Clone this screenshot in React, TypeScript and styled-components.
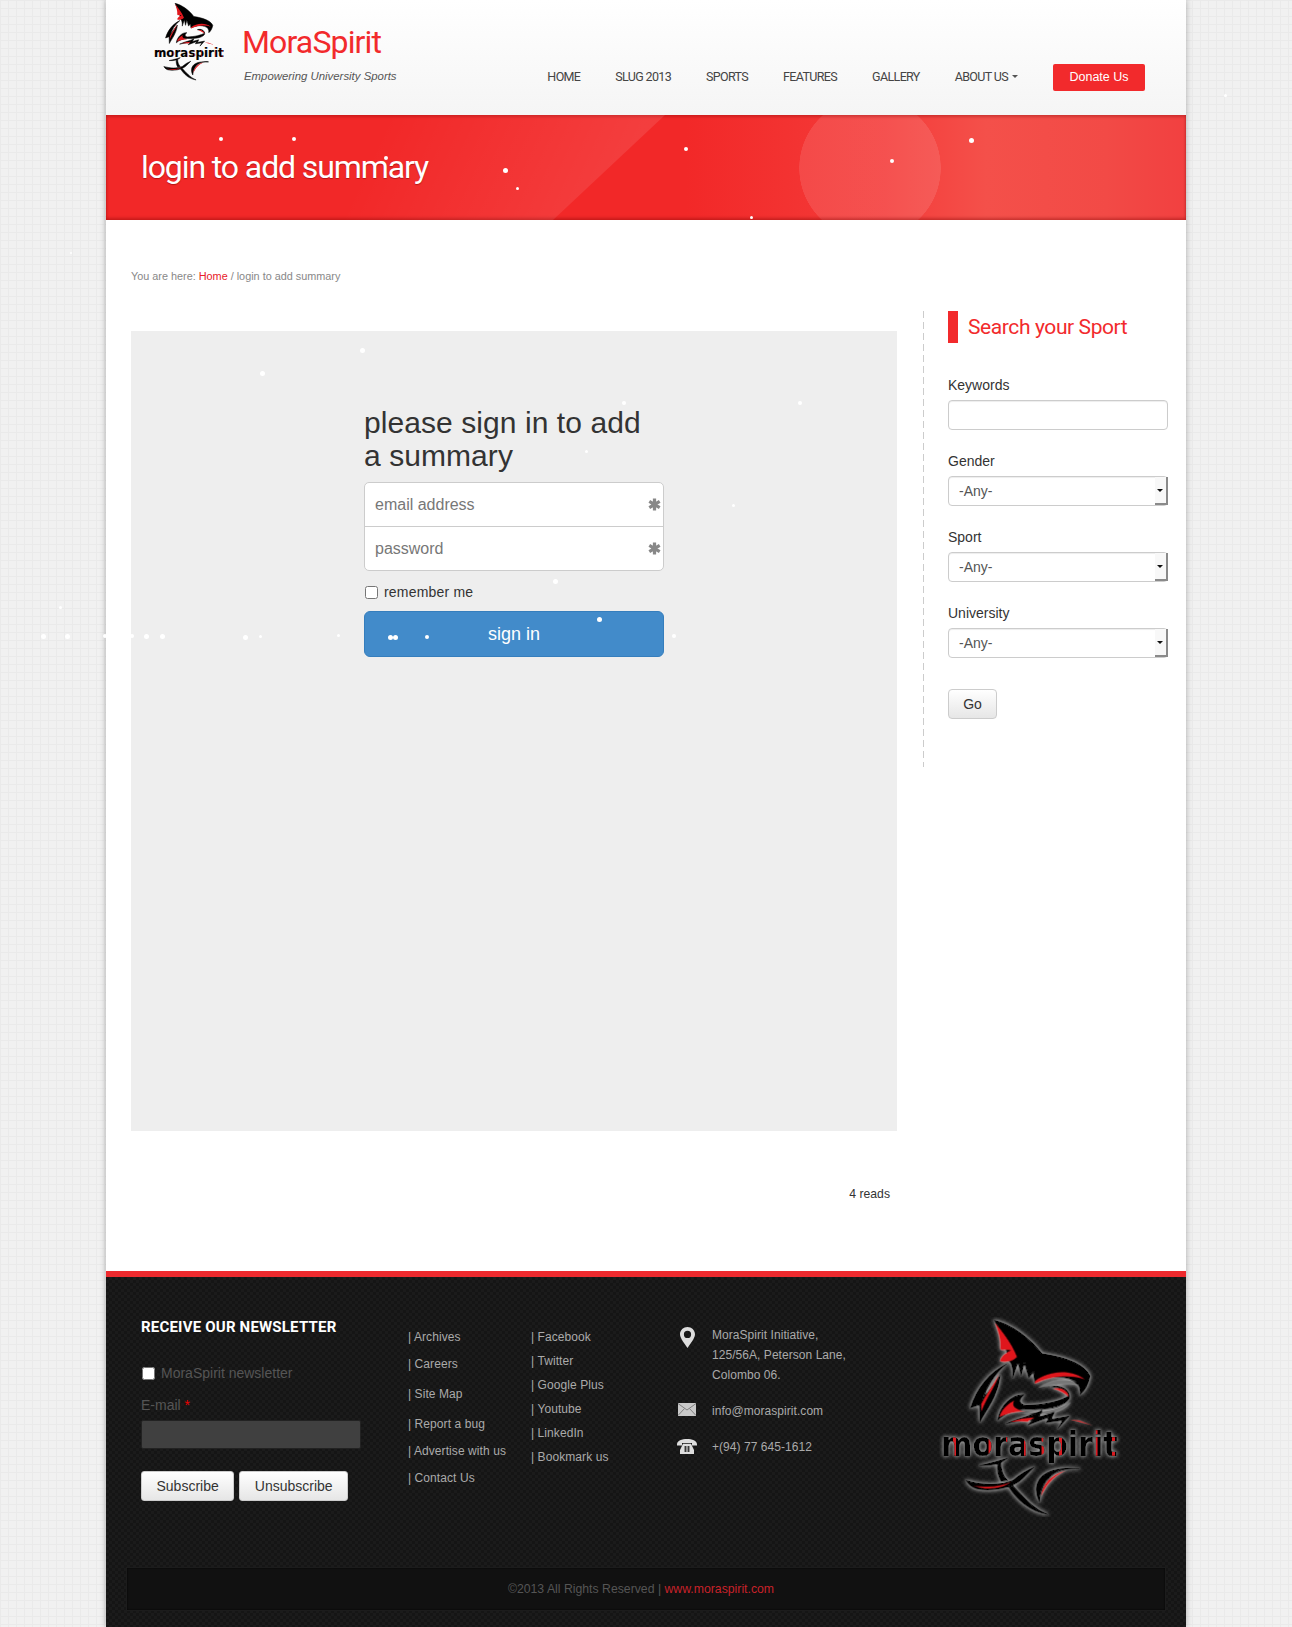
import React from "react";
import styled, { createGlobalStyle } from "styled-components";

const GlobalStyle = createGlobalStyle`
    html, body {
        margin: 0;
        padding: 0;
    }
    body {
        background-color: #f1f1f1;
        background-image: linear-gradient(#eaeaea 1px, transparent 1px), linear-gradient(90deg, #eaeaea 1px, transparent 1px);
        background-size: 8px 8px;
        font-family: "Liberation Sans", Arial, sans-serif;
        color: #333;
    }
`;

const HEADING_FONT = `Roboto, "Liberation Sans", sans-serif`;

const Page = styled.div`
    position: relative;
    height: 1627px;
    overflow: hidden;
`;

const Wrapper = styled.div`
    width: 1080px;
    height: 1627px;
    margin: 0 auto;
    background: #fff;
    box-shadow: 0 0 6px rgba(0, 0, 0, 0.3);
    display: flex;
    flex-direction: column;
`;

const Header = styled.header`
    height: 115px;
    box-sizing: border-box;
    padding: 2px 41px 0 46px;
    display: flex;
    background: linear-gradient(#ffffff, #f5f5f5);
`;

const Brand = styled.div`
    margin-left: 17px;
    padding-top: 22px;
    flex: 1;
`;

const SiteName = styled.div`
    font-family: ${HEADING_FONT};
    font-size: 32px;
    line-height: 36px;
    letter-spacing: -0.85px;
    color: #f22a2c;
`;

const Tagline = styled.div`
    margin: 9px 0 0 2px;
    font-size: 11.4px;
    line-height: 14px;
    font-style: italic;
    color: #555;
`;

const Nav = styled.nav`
    display: flex;
    align-items: center;
    height: 27px;
    margin-top: 62px;
    gap: 35px;
`;

const NavLink = styled.a`
    font-family: ${HEADING_FONT};
    font-size: 12.5px;
    letter-spacing: -0.65px;
    color: #444;
    display: flex;
    align-items: center;
    gap: 4px;
    margin-top: -2px;
`;

const Caret = styled.span`
    width: 0;
    height: 0;
    border-left: 3.5px solid transparent;
    border-right: 3.5px solid transparent;
    border-top: 3.5px solid #555;
`;

const DonateButton = styled.a`
    width: 92px;
    height: 27px;
    margin-left: 0;
    background: #f22a2c;
    color: #fff;
    border-radius: 2px;
    font-size: 12.5px;
    line-height: 27px;
    text-align: center;
`;

const Banner = styled.div`
    position: relative;
    height: 105px;
    box-sizing: border-box;
    padding: 32px 35px 0;
    overflow: hidden;
    background:
        radial-gradient(circle at 764px 53px, rgba(255, 255, 255, 0.11) 70.5px, transparent 71px),
        linear-gradient(90deg, #f22828 0, #f22828 580px, #f43c3a 780px, #f4504a 880px, #f24a46 1000px, #f24040 1080px);
    box-shadow: inset 0 2px 3px rgba(120, 0, 0, 0.3), inset 0 -2px 3px rgba(120, 0, 0, 0.35);

    &::before {
        content: "";
        position: absolute;
        inset: 0;
        clip-path: polygon(0 0, 559px 0, 447px 100%, 0 100%);
        background: linear-gradient(115deg, rgba(255, 255, 255, 0) 25%, rgba(255, 255, 255, 0.1) 48%);
    }
`;

const BannerTitle = styled.h1`
    position: relative;
    margin: 0;
    font-family: ${HEADING_FONT};
    font-weight: 400;
    font-size: 32px;
    line-height: 40px;
    letter-spacing: -1.1px;
    color: #fff;
    text-shadow: 0 1px 1px rgba(120, 0, 0, 0.5);
`;

const Main = styled.main`
    flex: 1;
    padding: 49px 18px 0 25px;
`;

const Breadcrumb = styled.div`
    font-size: 10.85px;
    line-height: 14px;
    color: #888;
    margin-bottom: 27px;
`;

const RedLink = styled.a`
    color: #e8202a;
`;

const Columns = styled.div`
    display: flex;
    align-items: flex-start;
`;

const Content = styled.div`
    width: 766px;
    margin-top: 21px;
    margin-right: 26px;
`;

const GreyBox = styled.div`
    height: 800px;
    box-sizing: border-box;
    padding-top: 75px;
    background: #eee;
`;

const SignIn = styled.form`
    width: 300px;
    margin: 0 auto;
`;

const SignInTitle = styled.h2`
    margin: 0 0 10px;
    font-size: 30px;
    line-height: 33px;
    font-weight: 400;
    letter-spacing: 0.07px;
    color: #333;
`;

const InputStack = styled.div`
    border: 1px solid #ccc;
    border-radius: 5px;
    background: #fff;
`;

const StackRow = styled.div<{ $last?: boolean }>`
    position: relative;
    box-sizing: border-box;
    height: ${(p) => (p.$last ? "43px" : "44px")};
    padding-left: 10px;
    font-size: 16px;
    line-height: 44px;
    color: #777;
    border-bottom: ${(p) => (p.$last ? "none" : "1px solid #ccc")};
`;

const Required = styled.svg`
    position: absolute;
    right: 2px;
    top: 15px;
`;

const Remember = styled.label`
    display: flex;
    align-items: center;
    margin: 11px 0 9px;
    font-size: 14px;
    line-height: 20px;
    letter-spacing: 0.2px;
    color: #333;
`;

const CheckBox = styled.input.attrs({ type: "checkbox" })`
    width: 13px;
    height: 13px;
    margin: 0 6px 0 1px;
`;

const SignInButton = styled.button`
    display: block;
    width: 300px;
    height: 46px;
    background: #428bca;
    border: 1px solid #357ebd;
    border-radius: 6px;
    color: #fff;
    font-family: inherit;
    font-size: 18px;
`;

const Reads = styled.div`
    margin-top: 56px;
    padding-right: 7px;
    text-align: right;
    font-size: 12.2px;
    line-height: 14px;
    color: #333;
`;

const Sidebar = styled.aside`
    width: 245px;
    height: 456px;
    margin-top: 1px;
    box-sizing: border-box;
    padding-left: 25px;
    background: repeating-linear-gradient(#ccc 0 7px, transparent 7px 11px) left top / 1px 100% no-repeat;
`;

const SideTitle = styled.h3`
    display: flex;
    align-items: center;
    height: 32px;
    margin: 0 0 33px;
    padding-left: 10px;
    border-left: 10px solid #f22a2c;
    font-family: ${HEADING_FONT};
    font-weight: 400;
    font-size: 21px;
    letter-spacing: -0.4px;
    color: #f22a2c;
`;

const Field = styled.div`
    margin-bottom: 22px;
`;

const FieldLabel = styled.label`
    display: block;
    margin-bottom: 6px;
    font-size: 14px;
    line-height: 18px;
    color: #333;
`;

const fieldBox = `
    display: block;
    width: 220px;
    height: 30px;
    box-sizing: border-box;
    border: 1px solid #ccc;
    border-radius: 4px;
    background: #fff;
    box-shadow: inset 0 1px 1px rgba(0, 0, 0, 0.075);
`;

const TextInput = styled.input`
    ${fieldBox}
`;

const SelectWrap = styled.div`
    position: relative;
    width: 220px;
`;

const Select = styled.select`
    ${fieldBox}
    appearance: none;
    padding-left: 10px;
    font-family: inherit;
    font-size: 14px;
    color: #555;
`;

const SelectArrow = styled.span`
    position: absolute;
    right: 0;
    top: 1px;
    width: 13px;
    height: 28px;
    box-sizing: border-box;
    background: #f8f8f8;
    border-right: 2px solid #8a8a8a;
    border-bottom: 2px solid #8a8a8a;

    &::after {
        content: "";
        position: absolute;
        left: 2px;
        top: 12px;
        border-left: 3px solid transparent;
        border-right: 3px solid transparent;
        border-top: 3.5px solid #111;
    }
`;

const GoButton = styled.button`
    width: 49px;
    height: 30px;
    margin-top: 9px;
    border: 1px solid #ccc;
    border-radius: 4px;
    background: linear-gradient(#ffffff, #e6e6e6);
    font-family: inherit;
    font-size: 14px;
    color: #333;
`;

const Footer = styled.footer`
    height: 356px;
    box-sizing: border-box;
    border-top: 6px solid #ee2a2e;
    padding: 0 20px;
    background-color: #151515;
    background-image:
        linear-gradient(45deg, #1b1b1b 25%, transparent 25%, transparent 75%, #1b1b1b 75%),
        linear-gradient(45deg, #1b1b1b 25%, transparent 25%, transparent 75%, #1b1b1b 75%);
    background-size: 6px 6px;
    background-position: 0 0, 3px 3px;
    display: flex;
    flex-direction: column;
`;

const FooterColumns = styled.div`
    height: 290px;
    display: flex;
    align-items: flex-start;
`;

const Newsletter = styled.div`
    width: 220px;
    margin-left: 15px;
    padding-top: 41px;
`;

const NewsTitle = styled.h4`
    margin: 0 0 27px;
    font-family: ${HEADING_FONT};
    font-size: 15px;
    line-height: 18px;
    font-weight: 700;
    letter-spacing: 0.2px;
    color: #fff;
`;

const NewsCheck = styled.label`
    display: flex;
    align-items: center;
    font-size: 14px;
    line-height: 20px;
    color: #555;
`;

const EmailLabel = styled.label`
    display: block;
    margin: 12px 0 5px;
    font-size: 14px;
    line-height: 20px;
    color: #555;
`;

const Star = styled.span`
    color: #e00;
`;

const DarkInput = styled.input`
    display: block;
    width: 220px;
    height: 29px;
    box-sizing: border-box;
    background: #404040;
    border: 1px solid #222;
    border-radius: 2px;
`;

const NewsButtons = styled.div`
    display: flex;
    gap: 5px;
    margin-top: 22px;
`;

const NewsButton = styled.button`
    height: 30px;
    padding: 0 14.5px;
    border: 1px solid #ccc;
    border-radius: 3px;
    background: linear-gradient(#ffffff, #e6e6e6);
    font-family: inherit;
    font-size: 14px;
    color: #333;
`;

const LinkColumn = styled.ul<{ $left: number; $width: number }>`
    list-style: none;
    width: ${(p) => p.$width}px;
    margin: 0 0 0 ${(p) => p.$left}px;
    padding: 53px 0 0;
    font-size: 12px;
    line-height: 14px;
    letter-spacing: 0.08px;
    color: #aaa;
`;

const LinkItem = styled.li<{ $gap: number }>`
    margin-bottom: ${(p) => p.$gap}px;
`;

const Contact = styled.div`
    width: 190px;
    margin-left: -3px;
    padding-top: 48px;
    font-size: 12px;
    line-height: 20px;
    letter-spacing: 0.05px;
    color: #aaa;
`;

const ContactRow = styled.div<{ $gap: number }>`
    display: grid;
    grid-template-columns: 26px 1fr;
    column-gap: 12px;
    margin-bottom: ${(p) => p.$gap}px;
`;

const ContactIcon = styled.div`
    display: flex;
    justify-content: center;
    padding-top: 2px;
`;

const FooterLogo = styled.div`
    margin: 40px 0 0 72px;
`;

const CopyBar = styled.div`
    height: 44px;
    box-sizing: border-box;
    padding-right: 10px;
    background: #111;
    border: 1px solid #1c1c1c;
    box-shadow: inset 0 0 2px #000;
    text-align: center;
    font-size: 12.25px;
    line-height: 42px;
    color: #555;
`;

const CopyLink = styled.a`
    color: #c8222a;
`;

const SnowLayer = styled.div`
    position: absolute;
    inset: 0;
    pointer-events: none;
`;

const Flake = styled.span`
    position: absolute;
    border-radius: 50%;
    background: #fff;
`;

const FLAKES: [number, number, number][] = [
    [221, 139, 4], [294, 139, 4], [386, 158, 4], [505, 170, 5], [517, 188, 3], [686, 149, 4],
    [892, 161, 4], [971, 140, 5], [751, 217, 3], [1225, 95, 3], [71, 253, 2], [362, 350, 5],
    [262, 373, 5], [624, 403, 4], [800, 403, 4], [586, 451, 3], [733, 505, 3], [555, 581, 5],
    [60, 607, 3], [43, 636, 5], [67, 636, 5], [105, 636, 4], [132, 636, 4], [146, 636, 5],
    [162, 636, 5], [245, 637, 5], [260, 636, 3], [338, 635, 3], [674, 636, 4], [599, 619, 5],
    [390, 637, 5], [395, 637, 5], [427, 637, 4],
];

const Snow = () => (
    <SnowLayer>
        {FLAKES.map(([x, y, s], i) => (
            <Flake key={i} style={{ left: x - s / 2, top: y - s / 2, width: s, height: s }} />
        ))}
    </SnowLayer>
);

const SharkLogo: React.FC<{ width: number; height: number; glow?: boolean }> = ({ width, height, glow }) => {
    const key = glow ? "big" : "small";
    return (
        <svg width={width} height={height} viewBox="900 85 555 600">
            <defs>
                <filter id={`glow-${key}`} x="-10%" y="-10%" width="120%" height="120%">
                    <feDropShadow dx="0" dy="0" stdDeviation="6" floodColor="#d8d8d8" floodOpacity="0.9" />
                </filter>
                <linearGradient id={`stripe-${key}`} gradientUnits="userSpaceOnUse" x1="915" x2="968" y1="0" y2="0" spreadMethod="repeat">
                    <stop offset="0" stopColor="#000" />
                    <stop offset="0.68" stopColor="#000" />
                    <stop offset="0.7" stopColor={glow ? "#d81a20" : "#8a0c10"} />
                    <stop offset="0.85" stopColor={glow ? "#d81a20" : "#8a0c10"} />
                    <stop offset="0.87" stopColor="#000" />
                    <stop offset="1" stopColor="#000" />
                </linearGradient>
            </defs>
            <g filter={glow ? `url(#glow-${key})` : undefined}>
                {glow && (
                    <path fill="#777" d="M1205 298C1250 268 1310 268 1340 292C1300 282 1250 286 1205 298ZM1150 372C1190 375 1260 368 1305 340C1285 375 1210 385 1150 372Z" />
                )}
                <g stroke="#000" strokeWidth="4" strokeLinejoin="round">
                    <path
                        fill="#000"
                        d="M1075 95C1125 105 1185 150 1218 195C1285 205 1345 225 1362 262C1358 285 1348 305 1332 318C1335 295 1325 278 1300 270C1260 258 1225 268 1196 282L1192 250L1178 268L1165 222L1155 262L1146 220L1130 268C1132 245 1128 225 1118 215C1110 175 1095 130 1075 95Z"
                    />
                    <path
                        fill="#000"
                        d="M1112 226C1060 250 1020 300 1003 358L1030 348L1032 400C1050 365 1085 325 1093 260C1075 285 1050 315 1040 335C1050 300 1075 255 1112 226Z"
                    />
                    <path
                        fill="#000"
                        d="M1085 395C1090 350 1130 315 1165 318C1150 330 1145 345 1170 350C1220 350 1280 335 1300 320C1290 300 1265 295 1245 295C1275 285 1305 305 1300 330C1280 360 1220 365 1170 362C1140 362 1105 375 1085 395Z"
                    />
                    <path
                        fill="#000"
                        d="M1110 405C1150 385 1190 382 1218 365L1208 385L1255 372L1245 392L1300 382L1265 420L1280 395L1230 402L1240 385L1175 410L1190 392C1165 395 1135 398 1110 405Z"
                    />
                    <path
                        fill="#000"
                        d="M990 575C1040 590 1090 590 1130 575C1150 558 1170 545 1195 535L1160 570C1130 600 1060 610 1020 600C1005 595 995 585 990 575ZM1130 590C1160 620 1190 660 1235 677C1180 670 1140 630 1118 595ZM1330 540C1260 535 1215 570 1210 640C1190 600 1200 560 1250 545C1275 538 1305 537 1330 540ZM1030 530C1060 525 1090 515 1115 508L1095 522C1095 540 1100 560 1115 575L1095 578C1085 560 1082 540 1085 525C1065 530 1045 532 1030 530Z"
                    />
                </g>
                <path
                    fill="#e0181e"
                    d="M1075 100C1095 125 1125 160 1143 205C1125 222 1105 222 1092 218C1092 208 1100 195 1125 185C1108 180 1095 190 1092 180C1095 155 1085 125 1075 100Z"
                />
                <path fill="#e0181e" d="M1196 278C1235 248 1300 238 1347 272C1305 256 1245 262 1196 286Z" />
                <path fill="#e0181e" d="M1090 255C1080 290 1055 320 1036 368L1036 345C1052 315 1072 285 1090 255Z" />
                <path
                    fill="#e0181e"
                    d="M1090 385C1095 365 1115 345 1135 335C1125 350 1135 362 1170 368C1145 368 1110 375 1090 385ZM1250 300C1275 292 1300 310 1298 325C1285 315 1270 305 1250 300Z"
                />
                <path fill="#e0181e" d="M1120 400C1145 390 1170 388 1195 386L1175 400C1155 398 1140 398 1120 400ZM1300 392L1370 410L1330 395Z" />
                <path fill="#e0181e" d="M1215 625C1218 585 1245 555 1290 545C1250 565 1230 590 1215 625ZM1010 590C1050 598 1095 595 1125 580C1095 602 1050 605 1010 590Z" />
                <text
                    x="915"
                    y="387"
                    transform="scale(1 1.3)"
                    textLength="530"
                    lengthAdjust="spacingAndGlyphs"
                    fontFamily='"DejaVu Sans", sans-serif'
                    fontWeight="700"
                    fontSize="76"
                    fill={`url(#stripe-${key})`}
                    stroke="#000"
                    strokeWidth="1"
                >
                    moraspirit
                </text>
            </g>
        </svg>
    );
};

const PinIcon = () => (
    <svg width="15" height="21" viewBox="0 0 15 21">
        <path
            fill="#ddd"
            fillRule="evenodd"
            d="M7.5 0C3.4 0 0 3.2 0 7.3C0 11.5 5 17 7.5 21C10 17 15 11.5 15 7.3C15 3.2 11.6 0 7.5 0ZM7.5 3.8A3.6 3.6 0 1 1 7.5 11A3.6 3.6 0 1 1 7.5 3.8Z"
        />
    </svg>
);

const MailIcon = () => (
    <svg width="18" height="13" viewBox="0 0 18 13">
        <rect width="18" height="13" fill="#c9c9c9" />
        <path d="M0 .5L9 7L18 .5M0 12.5L6.5 5.5M18 12.5L11.5 5.5" fill="none" stroke="#777" strokeWidth="0.9" />
    </svg>
);

const PhoneIcon = () => (
    <svg width="20" height="15" viewBox="0 0 20 15">
        <path fill="#ddd" d="M0 5.5C0 1.5 5 0 10 0S20 1.5 20 5.5L20 6.5L15 6.5L15 4L5 4L5 6.5L0 6.5Z" />
        <path fill="#ddd" d="M6 4.8L14 4.8L17 11L17 15L3 15L3 11Z" />
        <path d="M7 8H13M7 10H13M7 12H13M8.5 7V13M11.5 7V13" stroke="#222" strokeWidth="0.8" />
    </svg>
);

const AsteriskIcon = () => (
    <Required width="13" height="13" viewBox="0 0 12 12">
        <path d="M6 0.5V11.5M1.2 3.2L10.8 8.8M10.8 3.2L1.2 8.8" stroke="#888" strokeWidth="3" />
    </Required>
);

const SELECTS = ["Gender", "Sport", "University"];
const LINKS_LEFT: [string, number][] = [
    ["| Archives", 13], ["| Careers", 16], ["| Site Map", 16], ["| Report a bug", 13], ["| Advertise with us", 13], ["| Contact Us", 0],
];
const LINKS_RIGHT = ["| Facebook", "| Twitter", "| Google Plus", "| Youtube", "| LinkedIn", "| Bookmark us"];

const App: React.FC = () => {
    return (
        <Page>
            <GlobalStyle />
            <Wrapper>
                <Header>
                    <SharkLogo width={73} height={79} />
                    <Brand>
                        <SiteName>MoraSpirit</SiteName>
                        <Tagline>Empowering University Sports</Tagline>
                    </Brand>
                    <Nav>
                        <NavLink>HOME</NavLink>
                        <NavLink>SLUG 2013</NavLink>
                        <NavLink>SPORTS</NavLink>
                        <NavLink>FEATURES</NavLink>
                        <NavLink>GALLERY</NavLink>
                        <NavLink>
                            ABOUT US <Caret />
                        </NavLink>
                        <DonateButton>Donate Us</DonateButton>
                    </Nav>
                </Header>
                <Banner>
                    <BannerTitle>login to add summary</BannerTitle>
                </Banner>
                <Main>
                    <Breadcrumb>
                        You are here: <RedLink>Home</RedLink> / login to add summary
                    </Breadcrumb>
                    <Columns>
                        <Content>
                            <GreyBox>
                                <SignIn>
                                    <SignInTitle>please sign in to add a summary</SignInTitle>
                                    <InputStack>
                                        <StackRow>
                                            email address
                                            <AsteriskIcon />
                                        </StackRow>
                                        <StackRow $last>
                                            password
                                            <AsteriskIcon />
                                        </StackRow>
                                    </InputStack>
                                    <Remember>
                                        <CheckBox />
                                        remember me
                                    </Remember>
                                    <SignInButton type="button">sign in</SignInButton>
                                </SignIn>
                            </GreyBox>
                            <Reads>4 reads</Reads>
                        </Content>
                        <Sidebar>
                            <SideTitle>Search your Sport</SideTitle>
                            <Field>
                                <FieldLabel>Keywords</FieldLabel>
                                <TextInput />
                            </Field>
                            {SELECTS.map((name) => (
                                <Field key={name}>
                                    <FieldLabel>{name}</FieldLabel>
                                    <SelectWrap>
                                        <Select>
                                            <option>-Any-</option>
                                        </Select>
                                        <SelectArrow />
                                    </SelectWrap>
                                </Field>
                            ))}
                            <GoButton type="button">Go</GoButton>
                        </Sidebar>
                    </Columns>
                </Main>
                <Footer>
                    <FooterColumns>
                        <Newsletter>
                            <NewsTitle>RECEIVE OUR NEWSLETTER</NewsTitle>
                            <NewsCheck>
                                <CheckBox />
                                MoraSpirit newsletter
                            </NewsCheck>
                            <EmailLabel>
                                E-mail <Star>*</Star>
                            </EmailLabel>
                            <DarkInput />
                            <NewsButtons>
                                <NewsButton type="button">Subscribe</NewsButton>
                                <NewsButton type="button">Unsubscribe</NewsButton>
                            </NewsButtons>
                        </Newsletter>
                        <LinkColumn $left={47} $width={123}>
                            {LINKS_LEFT.map(([label, gap]) => (
                                <LinkItem key={label} $gap={gap}>
                                    {label}
                                </LinkItem>
                            ))}
                        </LinkColumn>
                        <LinkColumn $left={0} $width={146}>
                            {LINKS_RIGHT.map((label) => (
                                <LinkItem key={label} $gap={10}>
                                    {label}
                                </LinkItem>
                            ))}
                        </LinkColumn>
                        <Contact>
                            <ContactRow $gap={16}>
                                <ContactIcon>
                                    <PinIcon />
                                </ContactIcon>
                                <div>
                                    MoraSpirit Initiative,
                                    <br />
                                    125/56A, Peterson Lane,
                                    <br />
                                    Colombo 06.
                                </div>
                            </ContactRow>
                            <ContactRow $gap={16}>
                                <ContactIcon>
                                    <MailIcon />
                                </ContactIcon>
                                <div>info@moraspirit.com</div>
                            </ContactRow>
                            <ContactRow $gap={0}>
                                <ContactIcon>
                                    <PhoneIcon />
                                </ContactIcon>
                                <div>+(94) 77 645-1612</div>
                            </ContactRow>
                        </Contact>
                        <FooterLogo>
                            <SharkLogo width={185} height={200} glow />
                        </FooterLogo>
                    </FooterColumns>
                    <CopyBar>
                        ©2013 All Rights Reserved | <CopyLink>www.moraspirit.com</CopyLink>
                    </CopyBar>
                </Footer>
            </Wrapper>
            <Snow />
        </Page>
    );
};

export default App;
